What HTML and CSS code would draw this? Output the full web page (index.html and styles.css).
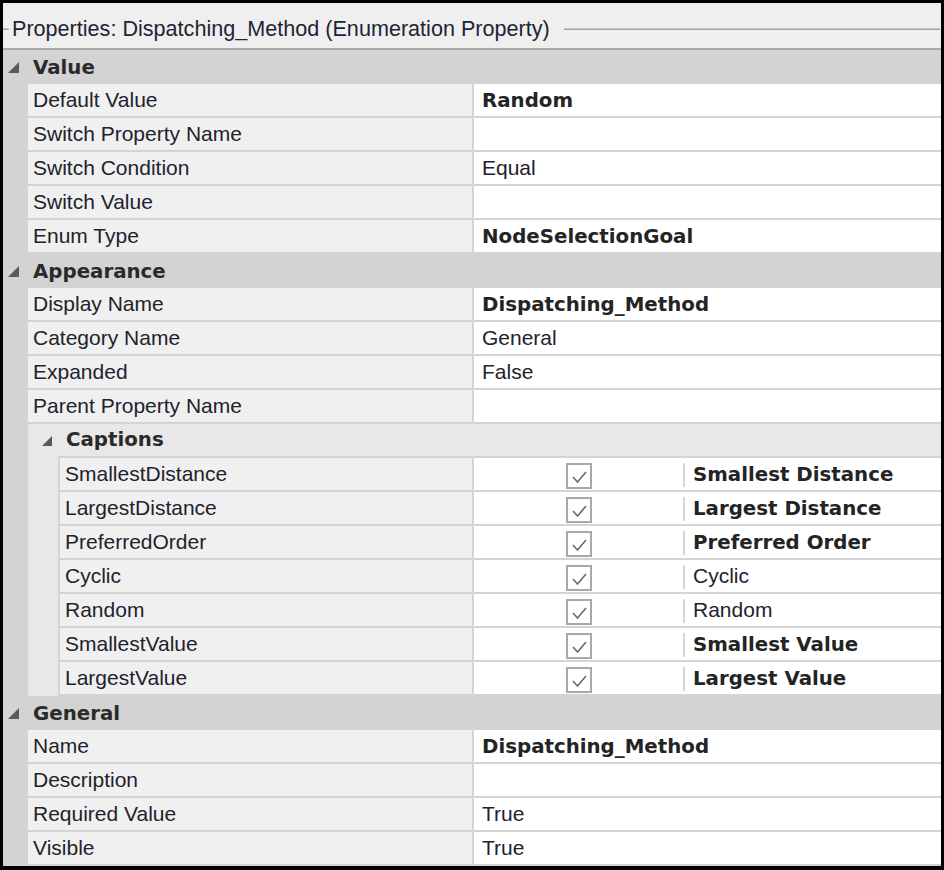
FILE: index.html
```html
<!DOCTYPE html>
<html>
<head>
<meta charset="utf-8">
<link rel="stylesheet" href="styles.css">
</head>
<body>
<div class="frame">
  <div class="title">
    <span class="tline short"></span>
    <span class="ttext">Properties: Dispatching_Method (Enumeration Property)</span>
    <span class="tline long"></span>
  </div>

  <div class="cat"><span class="tw"><svg width="11" height="11" viewBox="0 0 11 11"><polygon points="11,0 11,11 0,11" fill="#5a5a5a"/></svg></span><span class="cname">Value</span></div>
  <div class="row"><div class="gut"></div><div class="lbl">Default Value</div><div class="val b">Random</div></div>
  <div class="row"><div class="gut"></div><div class="lbl">Switch Property Name</div><div class="val"></div></div>
  <div class="row"><div class="gut"></div><div class="lbl">Switch Condition</div><div class="val">Equal</div></div>
  <div class="row"><div class="gut"></div><div class="lbl">Switch Value</div><div class="val"></div></div>
  <div class="row"><div class="gut"></div><div class="lbl">Enum Type</div><div class="val b">NodeSelectionGoal</div></div>

  <div class="cat"><span class="tw"><svg width="11" height="11" viewBox="0 0 11 11"><polygon points="11,0 11,11 0,11" fill="#5a5a5a"/></svg></span><span class="cname">Appearance</span></div>
  <div class="row"><div class="gut"></div><div class="lbl">Display Name</div><div class="val b">Dispatching_Method</div></div>
  <div class="row"><div class="gut"></div><div class="lbl">Category Name</div><div class="val">General</div></div>
  <div class="row"><div class="gut"></div><div class="lbl">Expanded</div><div class="val">False</div></div>
  <div class="row"><div class="gut"></div><div class="lbl">Parent Property Name</div><div class="val"></div></div>

  <div class="subcat"><div class="gut"></div><div class="subh"><svg width="10" height="10" viewBox="0 0 11 11"><polygon points="11,0 11,11 0,11" fill="#5a5a5a"/></svg></div><div class="subname">Captions</div></div>
  <div class="row"><div class="gut"></div><div class="sub"></div><div class="lbl nl">SmallestDistance</div><div class="val cv"><div class="chkcell"><span class="chk"><svg width="22" height="22" viewBox="0 0 22 22"><polyline points="5,12 9.5,17 18,7" fill="none" stroke="#6e6e6e" stroke-width="1.7"/></svg></span></div><span class="sep"></span><span class="ctext b">Smallest Distance</span></div></div>
  <div class="row"><div class="gut"></div><div class="sub"></div><div class="lbl nl">LargestDistance</div><div class="val cv"><div class="chkcell"><span class="chk"><svg width="22" height="22" viewBox="0 0 22 22"><polyline points="5,12 9.5,17 18,7" fill="none" stroke="#6e6e6e" stroke-width="1.7"/></svg></span></div><span class="sep"></span><span class="ctext b">Largest Distance</span></div></div>
  <div class="row"><div class="gut"></div><div class="sub"></div><div class="lbl nl">PreferredOrder</div><div class="val cv"><div class="chkcell"><span class="chk"><svg width="22" height="22" viewBox="0 0 22 22"><polyline points="5,12 9.5,17 18,7" fill="none" stroke="#6e6e6e" stroke-width="1.7"/></svg></span></div><span class="sep"></span><span class="ctext b">Preferred Order</span></div></div>
  <div class="row"><div class="gut"></div><div class="sub"></div><div class="lbl nl">Cyclic</div><div class="val cv"><div class="chkcell"><span class="chk"><svg width="22" height="22" viewBox="0 0 22 22"><polyline points="5,12 9.5,17 18,7" fill="none" stroke="#6e6e6e" stroke-width="1.7"/></svg></span></div><span class="sep"></span><span class="ctext">Cyclic</span></div></div>
  <div class="row"><div class="gut"></div><div class="sub"></div><div class="lbl nl">Random</div><div class="val cv"><div class="chkcell"><span class="chk"><svg width="22" height="22" viewBox="0 0 22 22"><polyline points="5,12 9.5,17 18,7" fill="none" stroke="#6e6e6e" stroke-width="1.7"/></svg></span></div><span class="sep"></span><span class="ctext">Random</span></div></div>
  <div class="row"><div class="gut"></div><div class="sub"></div><div class="lbl nl">SmallestValue</div><div class="val cv"><div class="chkcell"><span class="chk"><svg width="22" height="22" viewBox="0 0 22 22"><polyline points="5,12 9.5,17 18,7" fill="none" stroke="#6e6e6e" stroke-width="1.7"/></svg></span></div><span class="sep"></span><span class="ctext b">Smallest Value</span></div></div>
  <div class="row"><div class="gut"></div><div class="sub"></div><div class="lbl nl">LargestValue</div><div class="val cv"><div class="chkcell"><span class="chk"><svg width="22" height="22" viewBox="0 0 22 22"><polyline points="5,12 9.5,17 18,7" fill="none" stroke="#6e6e6e" stroke-width="1.7"/></svg></span></div><span class="sep"></span><span class="ctext b">Largest Value</span></div></div>

  <div class="cat"><span class="tw"><svg width="11" height="11" viewBox="0 0 11 11"><polygon points="11,0 11,11 0,11" fill="#5a5a5a"/></svg></span><span class="cname">General</span></div>
  <div class="row"><div class="gut"></div><div class="lbl">Name</div><div class="val b">Dispatching_Method</div></div>
  <div class="row"><div class="gut"></div><div class="lbl">Description</div><div class="val"></div></div>
  <div class="row"><div class="gut"></div><div class="lbl">Required Value</div><div class="val">True</div></div>
  <div class="row"><div class="gut"></div><div class="lbl">Visible</div><div class="val">True</div></div>
</div>
</body>
</html>
```

FILE: styles.css
```css
html, body {
  margin: 0;
  padding: 0;
  background: #000;
}
.frame {
  width: 944px;
  height: 870px;
  box-sizing: border-box;
  border: 3px solid #000;
  border-bottom-width: 4px;
  background: #d3d3d3;
  font-family: "Liberation Sans", Arial, sans-serif;
  font-size: 21px;
  color: #22222c;
  overflow: hidden;
}
.title {
  height: 47px;
  box-sizing: border-box;
  background: #efefef;
  border-bottom: 2px solid #a9a9a9;
  display: flex;
  align-items: center;
  padding-top: 7px;
}
.tline {
  height: 2px;
  background: linear-gradient(#c4c4c4 0 50%, #a4a4a4 50% 100%);
}
.tline.short { width: 6px; }
.tline.long { flex: 1; margin-right: 1px; }
.ttext {
  padding: 0 14px 0 3px;
  font-size: 21.6px;
  color: #1f2433;
  white-space: nowrap;
}
.cat {
  height: 34px;
  display: flex;
  align-items: center;
  background: #d3d3d3;
}
.tw {
  width: 25px;
  display: flex;
  align-items: center;
  padding-left: 5px;
  box-sizing: border-box;
}
.cname, .subname {
  font-family: "DejaVu Sans", sans-serif;
  font-weight: bold;
  font-size: 19.8px;
  color: #2a2a2a;
  padding-left: 5px;
}
.row {
  height: 34px;
  display: flex;
}
.gut {
  width: 25px;
  flex: none;
  background: #d3d3d3;
}
.lbl {
  width: 444px;
  flex: none;
  box-sizing: border-box;
  background: #f0f0f0;
  border-bottom: 2px solid #d4d4d4;
  padding-left: 5px;
  line-height: 32px;
  white-space: nowrap;
}
.lbl.nl { width: 412px; }
.sub {
  width: 32px;
  flex: none;
  box-sizing: border-box;
  background: #e8e8e8;
  border-right: 2px solid #d4d4d4;
}
.val {
  flex: 1;
  box-sizing: border-box;
  background: #fff;
  border-left: 2px solid #d4d4d4;
  border-bottom: 2px solid #d4d4d4;
  padding-left: 8px;
  line-height: 32px;
  white-space: nowrap;
}
.b {
  font-family: "DejaVu Sans", sans-serif;
  font-weight: bold;
  font-size: 19.8px;
  color: #242424;
}
.val.b {
  line-height: 34px;
}
.subcat {
  height: 34px;
  display: flex;
}
.subh {
  width: 30px;
  flex: none;
  background: #e8e8e8;
  display: flex;
  align-items: center;
  padding-left: 14px;
  box-sizing: border-box;
}
.subname {
  flex: 1;
  background: #e8e8e8;
  border-bottom: 2px solid #d4d4d4;
  line-height: 32px;
  padding-left: 8px;
}
.val.cv {
  display: flex;
  align-items: center;
  padding-left: 0;
}
.chkcell {
  width: 209px;
  display: flex;
  justify-content: center;
  padding-top: 3px;
}
.chk {
  width: 26px;
  height: 26px;
  box-sizing: border-box;
  border: 2px solid #a8a8a8;
  background: #fff;
  display: flex;
  align-items: center;
  justify-content: center;
}
.sep {
  width: 2px;
  height: 24px;
  margin-top: 2px;
  background: #d6d6d6;
}
.ctext {
  padding-left: 8px;
}
.ctext.b {
  padding-top: 2px;
}
```
